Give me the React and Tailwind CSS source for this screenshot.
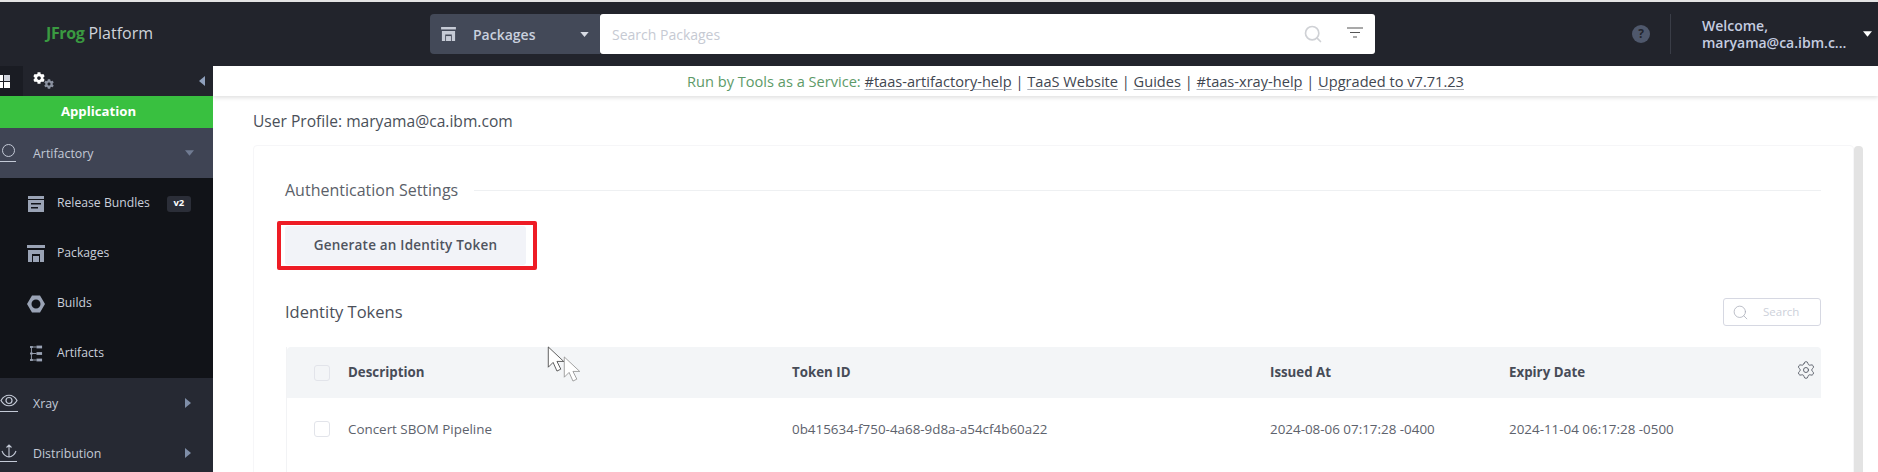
import React from "react";
import { Search, Settings } from "lucide-react";
import { FaCog } from "react-icons/fa";

const PackagesIcon = ({ className }) => (
  <svg viewBox="0 0 18 17" className={className} fill="currentColor">
    <rect x="0" y="0" width="18" height="3" />
    <path d="M1 5h16v12h-4V9H5v8H1z" />
    <rect x="6" y="11" width="6" height="6" />
  </svg>
);

const BundleIcon = () => (
  <svg viewBox="0 0 16 16" className="w-4 h-4 ml-[1px] text-[#9aa3b5]" fill="currentColor">
    <rect x="0" y="0" width="16" height="3" />
    <path d="M0 4h16v12H0z M3 7v1.5h10V7z M3 11v1.5h7V11z" fillRule="evenodd" />
  </svg>
);

const BuildsIcon = () => (
  <svg viewBox="0 0 18 18" className="w-[18px] h-[18px] text-[#9aa3b5]" fill="currentColor">
    <path fillRule="evenodd" d="M5 0.5h8l5 8.5-5 8.5H5L0 9zM9 4.5a4.5 4.5 0 100 9 4.5 4.5 0 000-9z" />
  </svg>
);

const ArtifactsIcon = () => (
  <svg viewBox="0 0 14 18" className="w-[13px] h-[17px] ml-[3px] text-[#9aa3b5]" fill="currentColor">
    <rect x="1" y="2" width="1" height="14" />
    <rect x="0" y="1" width="3" height="2" />
    <rect x="0" y="8" width="3" height="2" />
    <rect x="0" y="15" width="3" height="2" />
    <rect x="2" y="8.5" width="5" height="1" />
    <rect x="2" y="1.5" width="5" height="1" />
    <rect x="2" y="15.5" width="5" height="1" />
    <rect x="7" y="0.5" width="6" height="3" />
    <rect x="7" y="7.5" width="6" height="3" />
    <rect x="7" y="14.5" width="6" height="3" />
  </svg>
);

const Caret = ({ dir = "down", className }) => {
  const d = dir === "down" ? "M0 0h10L5 6z" : dir === "right" ? "M0 0l6 5-6 5z" : "M6 0v10L0 5z";
  const box = dir === "down" ? "0 0 10 6" : "0 0 6 10";
  return (
    <svg viewBox={box} className={className} fill="currentColor">
      <path d={d} />
    </svg>
  );
};

const Cursor = ({ className, line }) => (
  <svg viewBox="0 0 18 28" className={className} fill="#fff" stroke={line} strokeWidth="0.8">
    <path d="M1 1v21l5-5 4 9 4-2-4-8h7z" />
  </svg>
);

const subItems = [
  { label: "Release Bundles", icon: <BundleIcon />, badge: "v2" },
  { label: "Packages", icon: <PackagesIcon className="w-[18px] h-[17px] text-[#9aa3b5]" /> },
  { label: "Builds", icon: <BuildsIcon /> },
  { label: "Artifacts", icon: <ArtifactsIcon /> },
];

const NavRow = ({ label, icon, open }) => (
  <div className={`h-[50px] shrink-0 flex items-center text-[12.4px] text-[#c3c9d6] ${open ? "bg-[#3f4454]" : "bg-[#262933]"}`}>
    <div className="w-[33px] h-full flex justify-start items-center">{icon}</div>
    <span className="flex-1 pt-[2px]">{label}</span>
    {open ? (
      <Caret className="w-[9px] h-[6px] mr-[19px] text-[#707b92]" />
    ) : (
      <Caret dir="right" className="w-[6px] h-[10px] mr-[22px] text-[#7f8ea8]" />
    )}
  </div>
);

const Sidebar = () => (
  <aside className="w-[213px] shrink-0 bg-[#111318] flex flex-col overflow-hidden">
    <div className="h-[30px] flex bg-[#22242c] shrink-0">
      <div className="w-[23px] bg-[#1a1c23] flex items-center overflow-hidden">
        <div className="grid grid-cols-[6px_6px] gap-[1px] -ml-[3px] shrink-0">
          <span className="h-[6px] bg-white" />
          <span className="h-[6px] bg-[#cfd3dc]" />
          <span className="h-[6px] bg-white" />
          <span className="h-[6px] bg-white" />
        </div>
      </div>
      <div className="relative w-[24px] ml-[10px]">
        <FaCog className="absolute left-0 top-[6px] w-[12px] h-[12px] text-white" />
        <FaCog className="absolute left-[11px] top-[13px] w-[10px] h-[10px] text-[#8b92a1]" />
      </div>
      <div className="flex-1 flex justify-end items-center pr-[8px]">
        <Caret dir="left" className="w-[6px] h-[10px] text-[#8fa0bd]" />
      </div>
    </div>
    <div className="h-[32px] bg-[#39c040] text-white font-bold text-[13.2px] flex items-center justify-center shrink-0 pr-[16px] pb-[1px]">
      Application
    </div>
    <NavRow
      label="Artifactory"
      open
      icon={
        <div className="flex flex-col items-center w-[16px]">
          <span className="w-[13px] h-[13px] rounded-full border border-[#c3c9d6]" />
          <span className="w-[16px] h-[1px] bg-[#c3c9d6] mt-[4px]" />
        </div>
      }
    />
    {subItems.map((item) => (
      <div key={item.label} className="h-[50px] shrink-0 flex items-center pt-[1px] text-[12.2px] text-[#c9cfdb]">
        <div className="w-[57px] pl-[27px] flex items-center">{item.icon}</div>
        <span>{item.label}</span>
        {item.badge && (
          <span className="ml-[17px] w-[24px] h-[16px] rounded-[3px] bg-[#2b2e38] text-white text-[9.5px] font-bold flex items-center justify-center">
            {item.badge}
          </span>
        )}
      </div>
    ))}
    <NavRow
      label="Xray"
      icon={
        <div className="flex flex-col items-center w-[18px]">
          <svg viewBox="0 0 18 13" className="w-[18px] h-[13px]" fill="none" stroke="#c3c9d6" strokeWidth="1.2">
            <path d="M1 6.5c4-7 12-7 16 0-4 7-12 7-16 0z" />
            <circle cx="9" cy="6.5" r="3" />
          </svg>
          <span className="w-[18px] h-[1px] bg-[#c3c9d6] mt-[4px]" />
        </div>
      }
    />
    <NavRow
      label="Distribution"
      icon={
        <div className="flex flex-col items-center w-[17px]">
          <svg viewBox="0 0 16 14" className="w-[16px] h-[14px]" fill="none" stroke="#c3c9d6" strokeWidth="1.1">
            <path d="M8 1v12M5.5 3.5L8 1l2.5 2.5M1 7c1 3 4 6 7 6s6-3 7-6" />
          </svg>
          <span className="w-[17px] h-[1px] bg-[#c3c9d6] mt-[3px]" />
        </div>
      }
    />
  </aside>
);

const Link = ({ children }) => (
  <span className="underline decoration-1 decoration-[#a8acb4] underline-offset-2">{children}</span>
);

const TopBar = () => (
  <header className="h-[64px] shrink-0 bg-[#22242c] flex items-center text-[#c9d0de]">
    <div className="w-[430px] pl-[46px] pb-[2px] text-[16px] text-[#cfd3da]">
      <span className="font-bold text-[#3a9a41] tracking-tight">JFrog</span> Platform
    </div>
    <div className="w-[170px] h-[40px] rounded-l-[4px] bg-[#434958] flex items-center pl-[11px] pr-[11px]">
      <PackagesIcon className="w-[15px] h-[14px] text-[#c6cbd6]" />
      <span className="ml-[17px] text-[14px] font-semibold flex-1 text-[#c9d0de]">Packages</span>
      <Caret className="w-[9px] h-[5px] text-[#d8dce4]" />
    </div>
    <div className="w-[775px] h-[40px] rounded-[3px] bg-white flex items-center pl-[12px] pr-[12px]">
      <span className="flex-1 text-[14px] text-[#c6cad3]">Search Packages</span>
      <Search className="w-[20px] h-[20px] text-[#cfd1d5] mr-[24px]" strokeWidth={2} />
      <svg viewBox="0 0 16 11" className="w-[16px] h-[11px] mb-[4px]" stroke="#555" strokeWidth="1.2">
        <path d="M0 1h16M3 5.5h10M6 10h4" />
      </svg>
    </div>
    <div className="w-[295px] h-[40px] flex items-center">
      <span className="ml-[257px] w-[18px] h-[18px] rounded-full bg-[#4f586c] text-[#22242c] text-[12px] font-bold flex items-center justify-center shrink-0">
        ?
      </span>
    </div>
    <div className="w-[1px] h-[40px] bg-[#3a3d47] shrink-0" />
    <div className="ml-[31px] text-[14px] leading-[17px] font-semibold text-[#c5cde0] w-[145px] whitespace-nowrap">
      <div>Welcome,</div>
      <div>maryama@ca.ibm.c...</div>
    </div>
    <Caret className="w-[9px] h-[6px] ml-[16px] text-white" />
  </header>
);

const Banner = () => (
  <div className="relative z-10 h-[30px] shrink-0 bg-white shadow-[0_2px_4px_rgba(0,0,0,0.12)] flex items-center justify-center text-[14.6px] text-[#3f4650] pl-[60px] pt-[2px]">
    <span className="text-[#5d9a68]">Run by Tools as a Service:&nbsp;</span>
    <Link>#taas-artifactory-help</Link>
    <span>&nbsp;|&nbsp;</span>
    <Link>TaaS Website</Link>
    <span>&nbsp;|&nbsp;</span>
    <Link>Guides</Link>
    <span>&nbsp;|&nbsp;</span>
    <Link>#taas-xray-help</Link>
    <span>&nbsp;|&nbsp;</span>
    <Link>Upgraded to v7.71.23</Link>
  </div>
);

const gridCols = "grid grid-cols-[450px_478px_239px_1fr]";

const TokenTable = () => (
  <div className="ml-[32px] mr-[32px] h-[200px] border-l border-[#f2f3f5]">
    <div className="relative h-[51px] bg-[#f3f5f7] rounded-t-[4px] flex items-center text-[13.3px] font-bold text-[#474c57]">
      <div className="w-[28px] ml-[27px] shrink-0">
        <span className="block w-[16px] h-[16px] rounded-[3px] border border-[#e2e4ea]" />
      </div>
      <div className={`${gridCols} flex-1`}>
        <span className="pl-[6px]">Description</span>
        <span>Token ID</span>
        <span>Issued At</span>
        <span>Expiry Date</span>
      </div>
      <Settings className="absolute right-[5px] top-[13px] w-[20px] h-[20px] text-[#555b66]" strokeWidth={1.1} />
    </div>
    <div className="h-[62px] flex items-center text-[13.4px] text-[#5d626c]">
      <div className="w-[28px] ml-[27px] shrink-0">
        <span className="block w-[16px] h-[16px] rounded-[3px] border border-[#e2e4ea]" />
      </div>
      <div className={`${gridCols} flex-1`}>
        <span className="pl-[6px]">Concert SBOM Pipeline</span>
        <span>0b415634-f750-4a68-9d8a-a54cf4b60a22</span>
        <span>2024-08-06 07:17:28 -0400</span>
        <span>2024-11-04 06:17:28 -0500</span>
      </div>
    </div>
  </div>
);

const Content = () => (
  <main className="flex-1 min-w-0 flex flex-col overflow-hidden">
    <Banner />
    <div className="flex-1 flex min-h-0">
      <div className="flex-1 min-w-0 overflow-hidden">
        <h1 className="pl-[40px] mt-[15px] h-[20px] leading-[20px] text-[15.6px] text-[#4a4f59]">
          User Profile: maryama@ca.ibm.com
        </h1>
        <div className="ml-[40px] mt-[14px] border border-[#f6f6f8] rounded-[4px] h-[400px]">
          <div className="pl-[31px] pr-[32px] pt-[32px] flex items-center">
            <span className="text-[16px] text-[#5b5f69] whitespace-nowrap">Authentication Settings</span>
            <span className="flex-1 h-[1px] bg-[#eef0f2] ml-[16px]" />
          </div>
          <div className="ml-[23px] mt-[19px] w-[260px] h-[49px] border-[4px] border-[#ee1c25] rounded-[2px] flex items-center pl-[4px]">
            <button className="w-[241px] h-[39px] rounded-[3px] bg-[#f2f3f8] text-[13.5px] font-semibold tracking-[0.2px] text-[#4f535e]">
              Generate an Identity Token
            </button>
          </div>
          <div className="mt-[28px] pl-[31px] pr-[32px] flex items-center justify-between h-[28px]">
            <span className="text-[16.5px] font-medium text-[#4b4f59]">Identity Tokens</span>
            <div className="w-[98px] h-[28px] rounded-[3px] border border-[#d6d8e2] flex items-center pl-[8px]">
              <Search className="w-[17px] h-[17px] text-[#a9adb8]" strokeWidth={1.1} />
              <span className="ml-[14px] text-[11.5px] text-[#cdd1da]">Search</span>
            </div>
          </div>
          <div className="mt-[21px]">
            <TokenTable />
          </div>
        </div>
      </div>
      <div className="w-[24px] shrink-0 bg-white pt-[50px]">
        <div className="w-[9px] h-full bg-[#e3e3e3] rounded-t-[4px]" />
      </div>
    </div>
  </main>
);

export default function App() {
  return (
    <div className="w-[1878px] h-[472px] overflow-hidden bg-white flex flex-col font-['Open_Sans',sans-serif] relative">
      <div className="h-[2px] bg-[#e4e4e4] shrink-0" />
      <TopBar />
      <div className="flex-1 flex min-h-0">
        <Sidebar />
        <Content />
      </div>
      <div className="absolute left-[547px] top-[346px] flex">
        <Cursor line="#333" className="w-[18px] h-[27px] relative z-10" />
        <Cursor line="#888" className="w-[18px] h-[27px] -ml-[2px] mt-[10px]" />
      </div>
    </div>
  );
}
